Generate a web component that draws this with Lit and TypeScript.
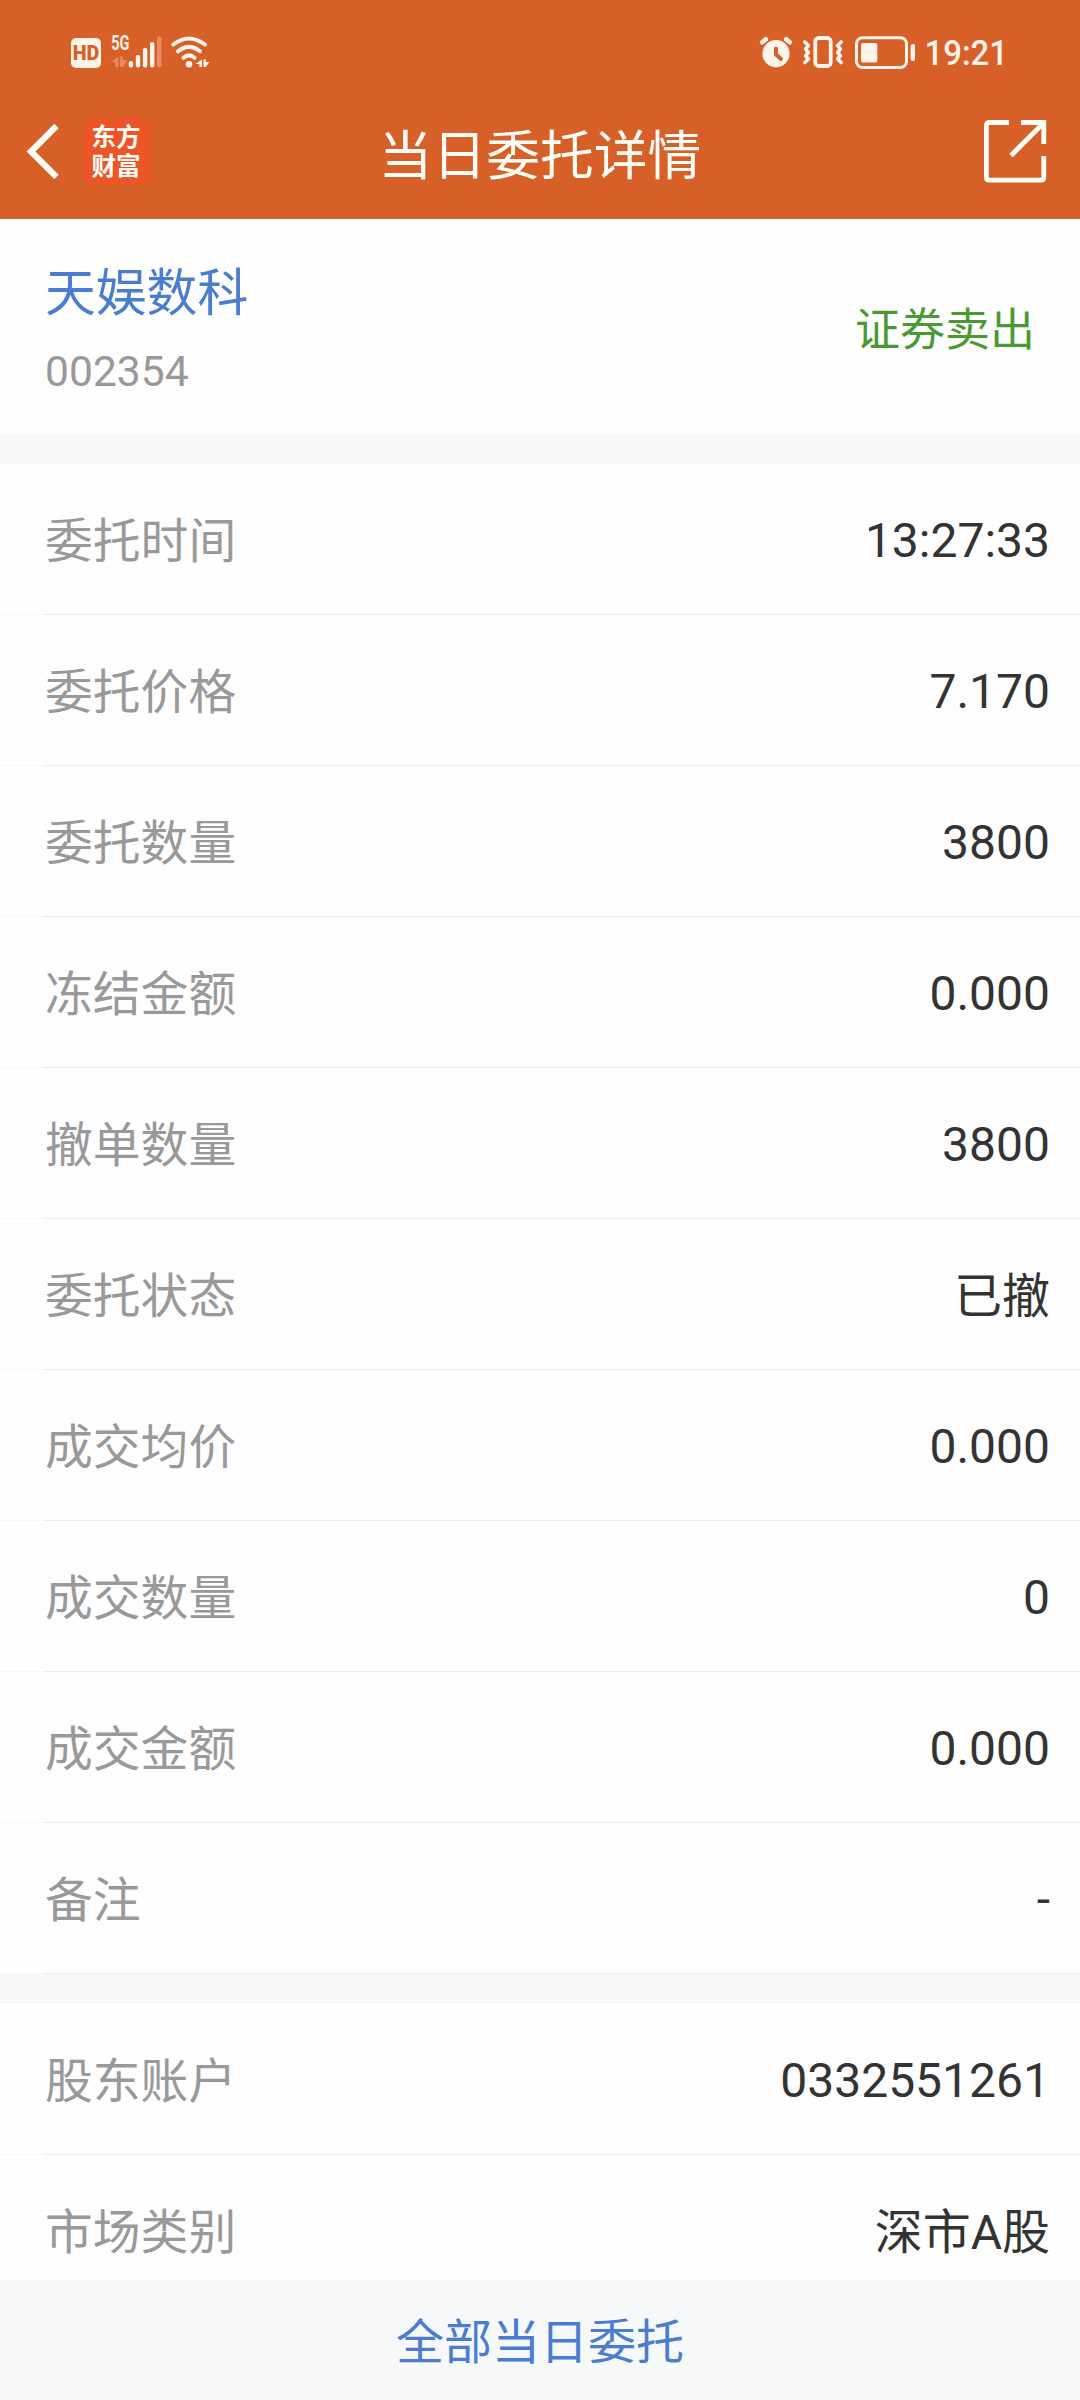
import { LitElement, html, css } from "lit";
import { customElement, property } from "lit/decorators.js";
import { classMap } from "lit/directives/class-map.js";

interface Field {
  label: string;
  value: string;
}

const ORDER_FIELDS: Field[] = [
  { label: "委托时间", value: "13:27:33" },
  { label: "委托价格", value: "7.170" },
  { label: "委托数量", value: "3800" },
  { label: "冻结金额", value: "0.000" },
  { label: "撤单数量", value: "3800" },
  { label: "委托状态", value: "已撤" },
  { label: "成交均价", value: "0.000" },
  { label: "成交数量", value: "0" },
  { label: "成交金额", value: "0.000" },
  { label: "备注", value: "-" },
];

const ACCOUNT_FIELDS: Field[] = [
  { label: "股东账户", value: "0332551261" },
  { label: "市场类别", value: "深市A股" },
];

@customElement("status-bar")
class StatusBar extends LitElement {
  static styles = css`
    :host {
      display: flex;
      justify-content: space-between;
      height: 104px;
      color: #fff3ea;
    }
    .icons {
      display: block;
    }
    .net {
      font: 700 19.500px Roboto, sans-serif;
    }
    .hd {
      font: 900 19.500px Roboto, sans-serif;
    }
    .clock {
      font: 500 34.500px Roboto, sans-serif;
    }
  `;

  render() {
    return html`
      <svg class="icons" width="360" height="104" viewBox="0 0 360 104" fill="currentColor">
        <rect x="71" y="38" width="30" height="30" rx="5" />
        <text class="hd" x="72.700" y="60" fill="#d75f28" textLength="26.500" lengthAdjust="spacingAndGlyphs">HD</text>
        <text class="net" x="111.200" y="50.300" textLength="18.200" lengthAdjust="spacingAndGlyphs">5G</text>
        <g fill="#e98c63">
          <path d="M118.300 56.500v10.500h-3v-5H111.500zM120.200 56.500h2.600v3.500h4.200l-4.200 7h-2.600z" />
          <rect x="157" y="36.500" width="4.400" height="31" rx="2" />
        </g>
        <rect x="128.700" y="61" width="4.400" height="6.500" rx="2" />
        <rect x="135.800" y="55" width="4.400" height="12.500" rx="2" />
        <rect x="142.900" y="48" width="4.400" height="19.500" rx="2" />
        <rect x="150" y="42" width="4.400" height="25.500" rx="2" />
        <g fill="none" stroke="currentColor" stroke-width="4" stroke-linecap="round">
          <path d="M173.300 44.500Q189 32.400 205 44.500" />
          <path d="M178 51.200Q189 42.500 200 51.200" />
          <path d="M183.500 57.800Q189 53 194.500 57.800" />
        </g>
        <circle cx="189" cy="64.300" r="3.300" />
        <path d="M202 59.500v7.500h-2.600v-3H195.500zM203.500 59.500h2.300v2.500h3.400l-3.400 5h-2.300z" />
      </svg>
      <svg class="icons" width="360" height="104" viewBox="0 0 360 104" fill="currentColor">
        <circle cx="56" cy="53.700" r="13.600" />
        <path d="M42.200 42.200L45.800 39.300M69.800 42.200L66.200 39.300" stroke="currentColor" stroke-width="4.600" stroke-linecap="round" fill="none" />
        <path d="M56 48.500V54.500L61 59" stroke="#d75f28" stroke-width="4" stroke-linecap="round" stroke-linejoin="round" fill="none" />
        <g fill="none" stroke="currentColor">
          <rect x="95.300" y="38" width="15.400" height="28" rx="3.500" stroke-width="3.800" />
          <path d="M84.800 42l3.600 3.500-2.800 3.700 2.800 3.300-2.800 3.300 2.800 3.200-3.600 3.500M121.200 42l-3.600 3.500 2.800 3.700-2.800 3.300 2.800 3.300-2.800 3.200 3.600 3.500" stroke-width="3.600" stroke-linejoin="round" stroke-linecap="round" />
          <rect x="136.500" y="37.800" width="50" height="29.700" rx="6" stroke-width="3" />
        </g>
        <rect x="141" y="43" width="16.300" height="19.500" rx="2" />
        <rect x="190.600" y="44" width="4.400" height="17" rx="2" />
        <text class="clock" x="204.500" y="65" textLength="83.500" lengthAdjust="spacingAndGlyphs">19:21</text>
      </svg>
    `;
  }
}

@customElement("title-bar")
class TitleBar extends LitElement {
  static styles = css`
    :host {
      display: grid;
      grid-template-columns: 1fr auto 1fr;
      align-items: start;
      height: 115px;
      color: #fffdf6;
    }
    .left {
      display: flex;
      gap: 24px;
      padding: 14px 0 0 26px;
    }
    .back {
      display: block;
      margin-top: 5px;
    }
    .logo {
      display: grid;
      align-content: start;
      justify-items: center;
      width: 68px;
      height: 67px;
      padding: 5px 2px 0 0;
      box-sizing: border-box;
      border-radius: 13px;
      background: #eb5528;
      font: 700 24.500px/29px Roboto, "Noto Sans CJK SC", sans-serif;
    }
    .title {
      padding-top: 8px;
      font: 400 53.800px/80px "Noto Sans CJK SC", sans-serif;
    }
    .share {
      display: block;
      justify-self: end;
      margin: 15px 33px 0 0;
    }
  `;

  render() {
    return html`
      <div class="left">
        <svg class="back" width="33" height="56" viewBox="0 0 33 56" fill="none" stroke="currentColor" stroke-width="6.200">
          <path d="M30.500 3L5 28.500L30.500 54" />
        </svg>
        <div class="logo"><span>东方</span><span>财富</span></div>
      </div>
      <div class="title">当日委托详情</div>
      <svg class="share" width="64" height="65" viewBox="0 0 64 65" fill="none" stroke="currentColor" stroke-width="4.800">
        <path d="M26 3.500H6.200Q3.400 3.500 3.400 6.300V58.300Q3.400 61.100 6.200 61.100H58Q60.800 61.100 60.800 58.300V37" />
        <path d="M38 3.500H60.800V25M60 4.500L28 36.500" />
      </svg>
    `;
  }
}

@customElement("detail-row")
class DetailRow extends LitElement {
  static styles = css`
    :host {
      display: flex;
      justify-content: space-between;
      height: 150px;
      padding: 0 30px 0 45px;
      line-height: 153px;
      font-family: Roboto, "Noto Sans CJK SC", sans-serif;
      font-size: 48px;
      border-bottom: 1px solid;
      border-image: linear-gradient(to right, #f8f8f9 45px, #ebecee 45px) 1;
    }
    .label {
      padding-top: 2px;
      color: #999;
      font-size: 47.800px;
    }
    .value {
      color: #333;
    }
    .han {
      padding-top: 1px;
    }
  `;

  @property() label = "";
  @property() value = "";

  render() {
    const han = /[\u4e00-\u9fff]/.test(this.value);
    return html`<span class="label">${this.label}</span
      ><span class=${classMap({ value: true, han })}>${this.value}</span>`;
  }
}

@customElement("app-root")
class AppRoot extends LitElement {
  static styles = css`
    :host {
      display: flex;
      flex-direction: column;
      height: 2400px;
      overflow: hidden;
      background: #f6f8fa;
      font-family: Roboto, "Noto Sans CJK SC", sans-serif;
    }
    .top {
      flex: none;
      background: #d75f28;
    }
    .content {
      flex: 1;
      min-height: 0;
      overflow: hidden;
      display: flex;
      flex-direction: column;
      gap: 30px;
    }
    .card {
      flex: none;
      background: #fefefe;
    }
    .summary {
      display: flex;
      justify-content: space-between;
      box-sizing: border-box;
      height: 215px;
      padding: 0 45px 0 45px;
    }
    .name {
      padding-top: 39px;
      color: #4a7dcf;
      font-size: 50.800px;
      line-height: 72px;
    }
    .code {
      padding-top: 11px;
      color: #999;
      font-size: 42.600px;
      line-height: 60px;
    }
    .side {
      padding-top: 4px;
      color: #4a9a33;
      font-size: 45px;
      line-height: 215px;
    }
    .footer {
      flex: none;
      height: 120px;
      color: #4a7dcf;
      font-size: 48px;
      line-height: 126px;
      text-align: center;
    }
  `;

  private rows(fields: Field[]) {
    return fields.map((f) => html`<detail-row .label=${f.label} .value=${f.value}></detail-row>`);
  }

  render() {
    return html`
      <header class="top">
        <status-bar></status-bar>
        <title-bar></title-bar>
      </header>
      <main class="content">
        <section class="card summary">
          <div>
            <div class="name">天娱数科</div>
            <div class="code">002354</div>
          </div>
          <div class="side">证券卖出</div>
        </section>
        <section class="card">${this.rows(ORDER_FIELDS)}</section>
        <section class="card">${this.rows(ACCOUNT_FIELDS)}</section>
      </main>
      <footer class="footer">全部当日委托</footer>
    `;
  }
}
